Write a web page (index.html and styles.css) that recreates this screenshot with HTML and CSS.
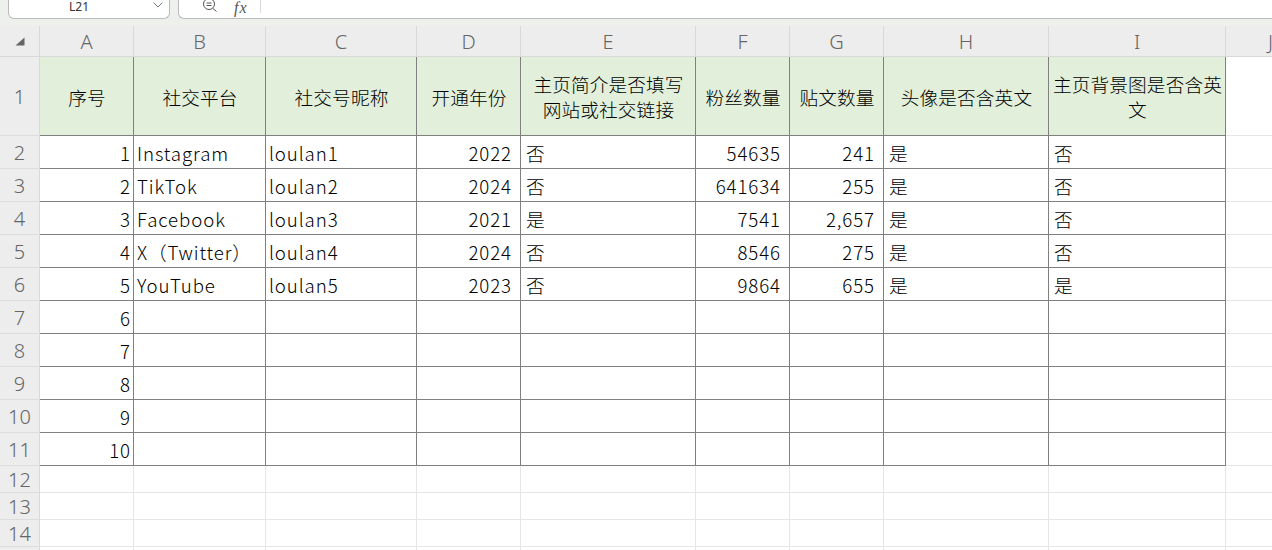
FILE: index.html
```html
<!DOCTYPE html>
<html lang="zh">
<head>
<meta charset="utf-8">
<title>Sheet</title>
<link rel="stylesheet" href="styles.css">
</head>
<body>
<div class="topbar">
  <div class="namebox"><span class="nameref">L21</span>
    <svg class="chev" width="10" height="6" viewBox="0 0 10 6"><path d="M0.5 0.5L5 5L9.5 0.5" fill="none" stroke="#777" stroke-width="1"/></svg>
  </div>
  <div class="formula">
    <svg class="zoomi" width="16" height="16" viewBox="0 0 16 16"><circle cx="7" cy="5" r="5.5" fill="none" stroke="#555"/><path d="M4.5 4H9.5M4.5 6.5H9.5M11 9.5L14.5 12.5" fill="none" stroke="#555"/></svg>
    <span class="fx">fx</span>
    <span class="fxsep"></span>
  </div>
</div>
<div class="sheet">
  <div class="ch corner"><svg width="10" height="10" viewBox="0 0 10 10"><path d="M0.5 9.5L9.5 1.5V9.5Z" fill="#666"/></svg></div>
  <div class="ch">A</div><div class="ch">B</div><div class="ch">C</div><div class="ch">D</div><div class="ch">E</div><div class="ch">F</div><div class="ch">G</div><div class="ch">H</div><div class="ch">I</div><div class="ch">J</div>

  <div class="rh">1</div>
  <div class="c hd">序号</div><div class="c hd">社交平台</div><div class="c hd">社交号昵称</div><div class="c hd">开通年份</div><div class="c hd">主页简介是否填写<br>网站或社交链接</div><div class="c hd">粉丝数量</div><div class="c hd">贴文数量</div><div class="c hd">头像是否含英文</div><div class="c hd">主页背景图是否含英文</div><div class="g"></div>

  <div class="rh">2</div>
  <div class="c r">1</div><div class="c">Instagram</div><div class="c">loulan1</div><div class="c r n">2022</div><div class="c t">否</div><div class="c r n">54635</div><div class="c r n">241</div><div class="c t">是</div><div class="c t">否</div><div class="g"></div>

  <div class="rh">3</div>
  <div class="c r">2</div><div class="c">TikTok</div><div class="c">loulan2</div><div class="c r n">2024</div><div class="c t">否</div><div class="c r n">641634</div><div class="c r n">255</div><div class="c t">是</div><div class="c t">否</div><div class="g"></div>

  <div class="rh">4</div>
  <div class="c r">3</div><div class="c">Facebook</div><div class="c">loulan3</div><div class="c r n">2021</div><div class="c t">是</div><div class="c r n">7541</div><div class="c r n">2,657</div><div class="c t">是</div><div class="c t">否</div><div class="g"></div>

  <div class="rh">5</div>
  <div class="c r">4</div><div class="c">X（Twitter）</div><div class="c">loulan4</div><div class="c r n">2024</div><div class="c t">否</div><div class="c r n">8546</div><div class="c r n">275</div><div class="c t">是</div><div class="c t">否</div><div class="g"></div>

  <div class="rh">6</div>
  <div class="c r">5</div><div class="c">YouTube</div><div class="c">loulan5</div><div class="c r n">2023</div><div class="c t">否</div><div class="c r n">9864</div><div class="c r n">655</div><div class="c t">是</div><div class="c t">是</div><div class="g"></div>

  <div class="rh">7</div>
  <div class="c r">6</div><div class="c"></div><div class="c"></div><div class="c"></div><div class="c"></div><div class="c"></div><div class="c"></div><div class="c"></div><div class="c"></div><div class="g"></div>
  <div class="rh">8</div>
  <div class="c r">7</div><div class="c"></div><div class="c"></div><div class="c"></div><div class="c"></div><div class="c"></div><div class="c"></div><div class="c"></div><div class="c"></div><div class="g"></div>
  <div class="rh">9</div>
  <div class="c r">8</div><div class="c"></div><div class="c"></div><div class="c"></div><div class="c"></div><div class="c"></div><div class="c"></div><div class="c"></div><div class="c"></div><div class="g"></div>
  <div class="rh">10</div>
  <div class="c r">9</div><div class="c"></div><div class="c"></div><div class="c"></div><div class="c"></div><div class="c"></div><div class="c"></div><div class="c"></div><div class="c"></div><div class="g"></div>
  <div class="rh">11</div>
  <div class="c r">10</div><div class="c"></div><div class="c"></div><div class="c"></div><div class="c"></div><div class="c"></div><div class="c"></div><div class="c"></div><div class="c"></div><div class="g"></div>

  <div class="rh">12</div><div class="g"></div><div class="g"></div><div class="g"></div><div class="g"></div><div class="g"></div><div class="g"></div><div class="g"></div><div class="g"></div><div class="g"></div><div class="g"></div>
  <div class="rh">13</div><div class="g"></div><div class="g"></div><div class="g"></div><div class="g"></div><div class="g"></div><div class="g"></div><div class="g"></div><div class="g"></div><div class="g"></div><div class="g"></div>
  <div class="rh">14</div><div class="g"></div><div class="g"></div><div class="g"></div><div class="g"></div><div class="g"></div><div class="g"></div><div class="g"></div><div class="g"></div><div class="g"></div><div class="g"></div>
  <div class="rh"></div><div class="g"></div><div class="g"></div><div class="g"></div><div class="g"></div><div class="g"></div><div class="g"></div><div class="g"></div><div class="g"></div><div class="g"></div><div class="g"></div>
</div>
</body>
</html>
```
FILE: styles.css
```css
html, body { margin: 0; padding: 0; }
body {
  width: 1272px;
  height: 550px;
  overflow: hidden;
  background: #fff;
  font-family: "Noto Sans CJK SC", "Liberation Sans", sans-serif;
  color: #000;
}
.topbar {
  height: 26px;
  box-sizing: border-box;
  background: #eef0ec;
  display: flex;
  align-items: flex-start;
  padding-left: 8px;
  gap: 8px;
}
.namebox, .formula {
  height: 19px;
  box-sizing: border-box;
  background: #fff;
  border: 1px solid #bbb;
  border-top: none;
  border-radius: 0 0 6px 6px;
  display: flex;
  align-items: center;
}
.namebox { width: 162px; position: relative; justify-content: center; }
.nameref { font-family: "Noto Sans", sans-serif; font-size: 12px; color: #333; margin-right: 20px; position: relative; top: -3px; }
.chev { position: absolute; right: 6px; top: 2px; }
.formula { flex: 1; border-right: none; border-radius: 0 0 0 6px; position: relative; }
.zoomi { position: absolute; left: 23px; top: -1px; }
.fx { position: absolute; left: 55px; top: 1px; font-family: "Liberation Serif", serif; font-style: italic; font-size: 16px; line-height: 14px; letter-spacing: 1px; color: #555; }
.fxsep { position: absolute; left: 81px; top: 0; width: 1px; height: 13px; background: #d8d8d8; }
.sheet {
  display: grid;
  grid-template-columns: 40px 94px 132px 151px 104px 175px 94px 94px 165px 177px 90px;
  grid-template-rows: 31px 79px repeat(10, 33px) repeat(3, 27px) 27px;
}
.ch, .rh {
  background: #ededed;
  display: flex;
  align-items: center;
  justify-content: center;
  font-family: "Noto Sans", "Liberation Sans", sans-serif;
  font-weight: 300;
  font-size: 20px;
  color: #666;
  box-sizing: border-box;
}
.ch { border-right: 1px solid #d9d9d9; border-bottom: 1px solid #d9d9d9; }
.rh { border-bottom: 1px solid #dcdcdc; border-right: 1px solid #d9d9d9; }
.c {
  box-sizing: border-box;
  border-right: 1px solid #808080;
  border-bottom: 1px solid #808080;
  display: flex;
  align-items: center;
  padding: 0 2px 0 3px;
  font-size: 18.67px;
  font-weight: 300;
  line-height: 25px;
  white-space: nowrap;
  letter-spacing: 0.9px;
}
.r { justify-content: flex-end; }
.n { padding-right: 8px; }
.t { padding-left: 5px; letter-spacing: 0; }
.hd {
  background: #e2efda;
  justify-content: center;
  text-align: center;
  white-space: normal;
  letter-spacing: 0.1px;
  padding: 0 0 0 1px;
}
.g {
  box-sizing: border-box;
  border-right: 1px solid #e6e6e6;
  border-bottom: 1px solid #e6e6e6;
}
```
